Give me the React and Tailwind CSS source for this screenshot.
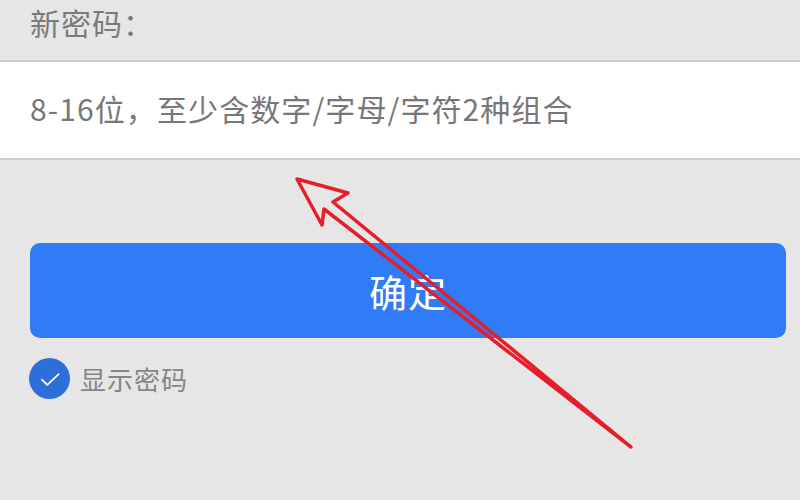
const font = { fontFamily: '"Noto Sans CJK SC", "Noto Sans", sans-serif' };

function CheckCircle() {
  return (
    <div className="w-[41px] h-[41px] rounded-full bg-[#2d6fd8] flex items-center justify-center shrink-0">
      <svg width="26" height="26" viewBox="0 0 24 24" fill="none" stroke="white" strokeWidth="1.6" strokeLinecap="round" strokeLinejoin="round">
        <path d="M4.5 12.5l5 5L20 7.5" />
      </svg>
    </div>
  );
}

export default function App() {
  return (
    <div className="relative w-[800px] h-[500px] overflow-hidden bg-[#e6e6e6]" style={font}>
      <div className="h-[60px] pl-[30px] pt-[4px] text-[30px] leading-[36px] tracking-[1px] text-[#7a7a7a]">新密码：</div>

      <div className="h-[100px] bg-white border-y-2 border-[#cdcdcd] flex items-center pl-[30px] pb-[3px]">
        <span className="text-[30px] text-[#777777] tracking-[1.1px]">8-16位，至少含数字/字母/字符2种组合</span>
      </div>

      <button className="mt-[83px] ml-[30px] w-[756px] h-[95px] rounded-[10px] bg-[#2f7cf6] text-white text-[38px] tracking-[1px] flex items-center justify-center">
        确定
      </button>

      <div className="mt-[20px] ml-[29px] flex items-center gap-[10px]">
        <CheckCircle />
        <span className="text-[26px] tracking-[1px] text-[#858585]">显示密码</span>
      </div>

      <svg className="absolute inset-0 pointer-events-none" width="800" height="500" viewBox="0 0 800 500">
        <polygon
          points="297,179 348,193 333,202 631,447 324,209 322,225"
          fill="none"
          stroke="#e61e2b"
          strokeWidth="3.5"
          strokeLinejoin="round"
        />
      </svg>
    </div>
  );
}
